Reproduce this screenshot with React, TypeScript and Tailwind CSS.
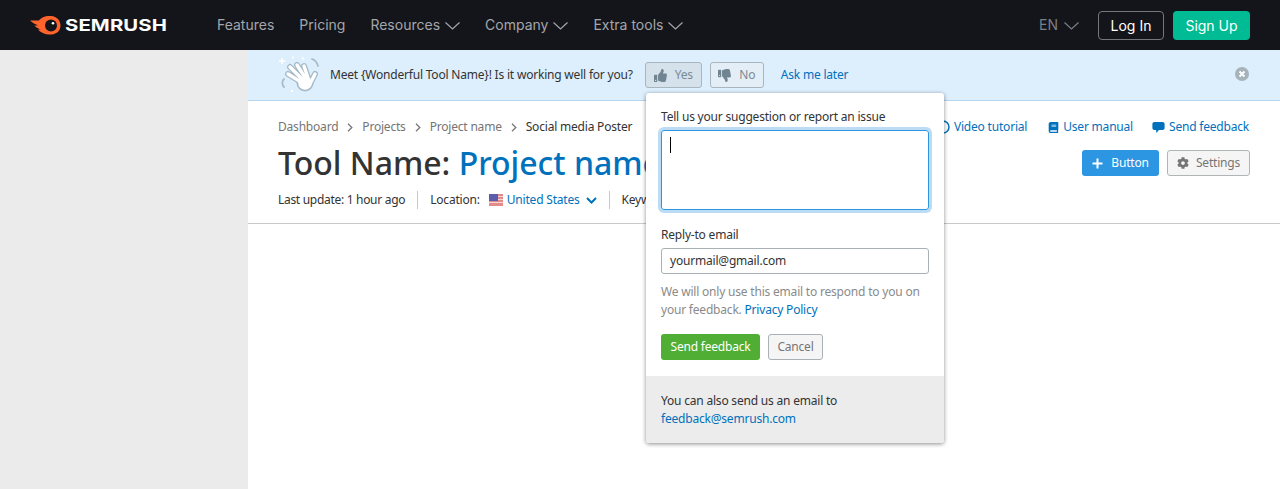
import { FaThumbsUp, FaThumbsDown, FaCog, FaBook } from "react-icons/fa";

const body = "font-['Noto_Sans','Open_Sans',sans-serif] tracking-[-0.2px]";

function NavChevron({ className }: { className: string }) {
  return (
    <svg width="15" height="8" viewBox="0 0 15 8" fill="none" stroke="currentColor" strokeWidth="1.2" className={className}>
      <polyline points="0.5,0.5 7.5,7 14.5,0.5" />
    </svg>
  );
}

function Logo() {
  return (
    <div className="flex items-center">
      <svg width="31" height="19" viewBox="0 0 31 19" className="mr-[4px]">
        <path
          d="M0 4.5 H9 C11 2 14 0 20 0 H21 C27 0.5 30.5 4.5 30.5 9.5 C30.5 14.5 27 18 21.5 18.5 C15 18.7 10.5 16.5 8 13.5 H11 C9 13 6 11.5 4.5 9.5 H8 C6 8.5 2 6.5 0 4.5 Z"
          fill="#ff642d"
        />
        <circle cx="21" cy="9.4" r="6" fill="#13151a" />
        <circle cx="23" cy="7.2" r="1.3" fill="#fff" />
      </svg>
      <span className="inline-block font-['Inter',sans-serif] font-bold text-[16.5px] tracking-[0.1px] text-white scale-x-[1.23] origin-left">SEMRUSH</span>
    </div>
  );
}

function TopBar() {
  const items = [
    { label: "Features", chevron: false },
    { label: "Pricing", chevron: false },
    { label: "Resources", chevron: true },
    { label: "Company", chevron: true },
    { label: "Extra tools", chevron: true },
  ];
  return (
    <header className="h-[50px] shrink-0 bg-[#13151a] flex items-center pl-[30px] pr-[30px] font-['Inter',sans-serif]">
      <div className="w-[187px]">
        <Logo />
      </div>
      <nav className="flex items-center gap-[25px] text-[14px] text-[#a4a6ab] mb-[1px]">
        {items.map((it) => (
          <div key={it.label} className="flex items-center gap-[5px]">
            <span>{it.label}</span>
            {it.chevron && <NavChevron className="mt-[2px]" />}
          </div>
        ))}
      </nav>
      <div className="ml-auto flex items-center text-[14px]">
        <div className="flex items-center gap-[6px] text-[#7b7e85] mr-[19px] mb-[1px]">
          <span>EN</span>
          <NavChevron className="mt-[2px]" />
        </div>
        <button className="h-[29px] w-[66px] rounded-[4px] border border-[#75777c] text-white mr-[9px]">Log In</button>
        <button className="h-[29px] w-[77px] rounded-[4px] bg-[#00bb94] text-white">Sign Up</button>
      </div>
    </header>
  );
}

function WaveIcon() {
  const fingers = "M22 26 L9 18 M24 24 L11 11 M27 23 L18 9 M29 22 L25 10 M31 28 L36 18";
  return (
    <svg width="40" height="36" viewBox="0 0 40 36" fill="none" className="mr-[11px] mt-[-2px]">
      <path d="M0 5 h6 M3 2 v6" stroke="#fff" strokeWidth="1.5" />
      <circle cx="14" cy="1.5" r="1" fill="#fff" />
      <circle cx="24" cy="2.5" r="1.3" fill="#fff" />
      <circle cx="13" cy="35" r="1.2" fill="#fff" />
      <circle cx="26" cy="27" r="8.5" fill="#a6bac8" />
      <path d={fingers} stroke="#a6bac8" strokeWidth="6" strokeLinecap="round" />
      <path d={fingers} stroke="#fff" strokeWidth="3.4" strokeLinecap="round" />
      <circle cx="26" cy="27" r="6.8" fill="#fff" />
      <path d="M33 3 C36 4 38 6 39 10" stroke="#a6bac8" strokeWidth="1.8" strokeLinecap="round" />
      <path d="M5 23 C2.5 25 3 29 5 31" stroke="#a6bac8" strokeWidth="1.8" strokeLinecap="round" />
    </svg>
  );
}

function FeedbackBanner() {
  return (
    <div className="h-[51px] bg-[#ddeefc] border-b border-[#b5d6f0] flex items-center pl-[31px] pr-[31px] text-[12px] text-[#333]">
      <WaveIcon />
      <span>Meet {"{Wonderful Tool Name}"}! Is it working well for you?</span>
      <button className="ml-[12px] h-[26px] w-[57px] rounded-[3px] border border-[#a9b6bf] bg-[#d5e2ec] flex items-center justify-center gap-[8px] text-[#7c8a94]">
        <FaThumbsUp className="text-[13px] text-[#708492]" />
        Yes
      </button>
      <button className="ml-[8px] h-[26px] w-[54px] rounded-[3px] border border-[#a9b6bf] bg-[#e4eef6] flex items-center justify-center gap-[8px] text-[#7c8a94]">
        <FaThumbsDown className="text-[13px] text-[#708492]" />
        No
      </button>
      <a className="ml-[17px] text-[#0071bc]">Ask me later</a>
      <svg width="14" height="14" viewBox="0 0 14 14" className="ml-auto mt-[-2px]">
        <circle cx="7" cy="7" r="7" fill="#a7b3bb" />
        <path d="M4.5 4.5 L9.5 9.5 M9.5 4.5 L4.5 9.5" stroke="#fff" strokeWidth="1.8" />
      </svg>
    </div>
  );
}

function BreadcrumbArrow() {
  return (
    <svg width="6" height="9" viewBox="0 0 6 9" fill="none" stroke="#777" strokeWidth="1.3" className="mx-[9px]">
      <polyline points="1,0.8 4.8,4.5 1,8.2" />
    </svg>
  );
}

function Flag() {
  return (
    <svg width="14" height="12" viewBox="0 0 14 12" className="mx-[4px]">
      <rect width="14" height="12" fill="#e38a8a" />
      <rect y="2" width="14" height="1" fill="#f6d5d5" />
      <rect y="5" width="14" height="1" fill="#f6d5d5" />
      <rect y="8" width="14" height="1" fill="#f6d5d5" />
      <rect width="9" height="7" fill="#5c5cad" />
    </svg>
  );
}

function ToolHeader() {
  return (
    <div className="h-[123px] border-b border-[#c9c9c9] pl-[30px] pr-[30px] pt-[17px] flex justify-between">
      <div>
        <div className="flex items-center text-[12px] leading-[18px] text-[#757575]">
          <span>Dashboard</span>
          <BreadcrumbArrow />
          <span>Projects</span>
          <BreadcrumbArrow />
          <span>Project name</span>
          <BreadcrumbArrow />
          <span className="text-[#333]">Social media Poster</span>
        </div>
        <h1 className="mt-[7px] text-[32px] leading-[40px] tracking-normal font-medium text-[#333] whitespace-nowrap">
          Tool Name: <span className="text-[#0071bc]">Project name</span>
        </h1>
        <div className="mt-[8px] flex items-center text-[12px] leading-[18px] text-[#333]">
          <span className="tracking-[-0.3px]">Last update: 1 hour ago</span>
          <span className="mx-[12px] h-[18px] w-px bg-[#c9c9c9]" />
          <span>Location:</span>
          <span className="ml-[5px] flex items-center text-[#0071bc]">
            <Flag />
            United States
            <svg width="11" height="7" viewBox="0 0 11 7" fill="none" stroke="#0071bc" strokeWidth="2" className="ml-[6px]">
              <polyline points="1,1 5.5,5.5 10,1" />
            </svg>
          </span>
          <span className="mx-[12px] h-[18px] w-px bg-[#c9c9c9]" />
          <span>Keywords</span>
        </div>
      </div>
      <div className="flex flex-col items-end">
        <div className="mr-[1px] flex items-center text-[12px] leading-[18px] text-[#0071bc]">
          <span className="flex items-center gap-[4px]">
            <svg width="14" height="14" viewBox="0 0 14 14" fill="none" stroke="#0071bc" strokeWidth="1.5">
              <circle cx="7" cy="7" r="6" />
            </svg>
            Video tutorial
          </span>
          <span className="ml-[21px] flex items-center gap-[4px]">
            <FaBook className="text-[11px]" />
            User manual
          </span>
          <span className="ml-[19px] flex items-center gap-[4px]">
            <svg width="13" height="13" viewBox="0 0 13 13" fill="#0071bc">
              <path d="M2.5 1 H10.5 C11.8 1 12.6 1.8 12.6 3 V7 C12.6 8.2 11.8 9 10.5 9 H7 L4.2 12 V9 H2.5 C1.2 9 0.4 8.2 0.4 7 V3 C0.4 1.8 1.2 1 2.5 1 Z" />
            </svg>
            Send feedback
          </span>
        </div>
        <div className="mt-[14px] flex items-center text-[12px]">
          <button className="h-[26px] w-[77px] rounded-[3px] bg-[#2c96e3] text-white flex items-center justify-center gap-[8px]">
            <svg width="11" height="11" viewBox="0 0 11 11" stroke="#fff" strokeWidth="2">
              <path d="M5.5 0.5 V10.5 M0.5 5.5 H10.5" />
            </svg>
            Button
          </button>
          <button className="ml-[8px] h-[26px] w-[83px] rounded-[3px] border border-[#b0b5b8] bg-[#f5f5f5] text-[#757575] flex items-center justify-center gap-[7px]">
            <FaCog className="text-[12px]" />
            Settings
          </button>
        </div>
      </div>
    </div>
  );
}

function FeedbackPopover() {
  return (
    <div className="absolute left-[398px] top-[43px] w-[298px] rounded-[3px] bg-white shadow-[0_1px_4px_rgba(0,0,0,0.45)] text-[12px] text-[#333] overflow-hidden">
      <div className="px-[15px] pt-[15px] pb-[16px]">
        <label className="block leading-[18px]">Tell us your suggestion or report an issue</label>
        <div className="mt-[4px] h-[80px] rounded-[3px] border border-[#2c96e3] shadow-[0_0_0_3px_#bcdcf6] pl-[8px] pt-[6px]">
          <div className="w-px h-[16px] bg-black" />
        </div>
        <label className="block mt-[16px] leading-[18px]">Reply-to email</label>
        <div className="mt-[4px] h-[26px] rounded-[3px] border border-[#a9b1b5] pl-[8px] flex items-center">yourmail@gmail.com</div>
        <p className="mt-[9px] leading-[18px] text-[#8a8a8a]">
          We will only use this email to respond to you on your feedback. <a className="text-[#0071bc]">Privacy Policy</a>
        </p>
        <div className="mt-[15px] flex items-center gap-[8px]">
          <button className="h-[26px] w-[99px] rounded-[3px] bg-[#4fae33] text-white">Send feedback</button>
          <button className="h-[26px] w-[55px] rounded-[3px] border border-[#a9b1b5] bg-[#f5f5f5] text-[#757575]">Cancel</button>
        </div>
      </div>
      <div className="bg-[#ececec] px-[15px] pt-[16px] pb-[15px] leading-[18px]">
        <p>You can also send us an email to</p>
        <a className="text-[#0071bc]">feedback@semrush.com</a>
      </div>
    </div>
  );
}

export default function App() {
  return (
    <div className="h-screen flex flex-col overflow-hidden bg-white">
      <TopBar />
      <div className={`flex flex-1 ${body}`}>
        <aside className="w-[248px] shrink-0 bg-[#ebebeb]" />
        <main className="relative flex-1">
          <FeedbackBanner />
          <ToolHeader />
          <FeedbackPopover />
        </main>
      </div>
    </div>
  );
}
